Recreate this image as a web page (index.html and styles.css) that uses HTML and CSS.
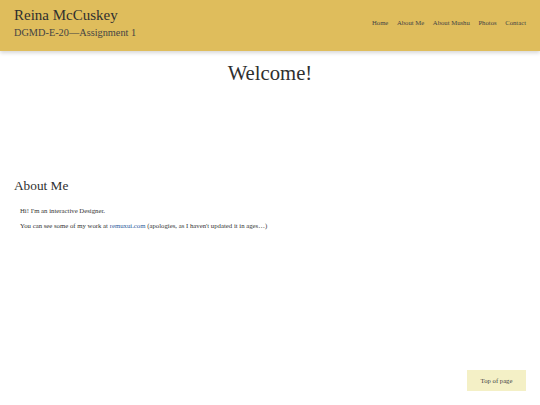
FILE: index.html
```html
<!DOCTYPE html>
<html>
<head>
<meta charset="utf-8">
<link rel="stylesheet" href="styles.css">
</head>
<body>
<header class="site-header">
  <div class="brand">
    <div class="name">Reina McCuskey</div>
    <div class="course">DGMD-E-20—Assignment 1</div>
  </div>
  <nav class="nav">
    <a href="#">Home</a>
    <a href="#">About Me</a>
    <a href="#">About Mushu</a>
    <a href="#">Photos</a>
    <a href="#">Contact</a>
  </nav>
</header>
<main>
  <h1 class="welcome">Welcome!</h1>
  <section class="about">
    <h2>About Me</h2>
    <p>Hi! I'm an interactive Designer.</p>
    <p>You can see some of my work at <a href="#">remuxui.com</a> (apologies, as I haven't updated it in ages…)</p>
  </section>
</main>
<a class="top" href="#">Top of page</a>
</body>
</html>
```
FILE: styles.css
```css
html, body { margin: 0; padding: 0; }
body {
  font-family: "Liberation Serif", serif;
  color: #333;
  background: #fff;
  width: 540px;
  height: 405px;
  position: relative;
  overflow: hidden;
}
.site-header {
  background: #dfbd5c;
  height: 51px;
  box-sizing: border-box;
  display: flex;
  justify-content: space-between;
  align-items: flex-start;
  padding: 6px 14px 0 14px;
  box-shadow: 0 2px 4px rgba(0,0,0,0.16);
}
.name { font-size: 15px; line-height: 18px; color: #2f2f2f; }
.course { font-size: 10.3px; line-height: 12px; margin-top: 2.5px; color: #444; }
.nav { display: flex; gap: 8.6px; margin-top: 12.7px; }
.nav a { font-size: 6.7px; line-height: 8px; color: #444; text-decoration: none; }
.welcome {
  text-align: center;
  font-weight: normal;
  font-size: 20.7px;
  margin: 10px 0 0;
  line-height: 24px;
  color: #2f2f2f;
}
.about { padding: 0 14px; margin-top: 93px; }
.about h2 { font-weight: normal; font-size: 13.3px; margin: 0 0 13.3px; line-height: 16px; color: #2f2f2f; }
.about p { font-size: 6.75px; margin: 0 0 6.7px 6px; line-height: 8px; }
.about a { color: #2c5b9b; text-decoration: none; }
.top {
  position: absolute;
  left: 467px;
  top: 370px;
  width: 59px;
  height: 21px;
  background: #f4f0c6;
  color: #444;
  font-size: 6.7px;
  text-decoration: none;
  display: flex;
  align-items: center;
  justify-content: center;
}
```
